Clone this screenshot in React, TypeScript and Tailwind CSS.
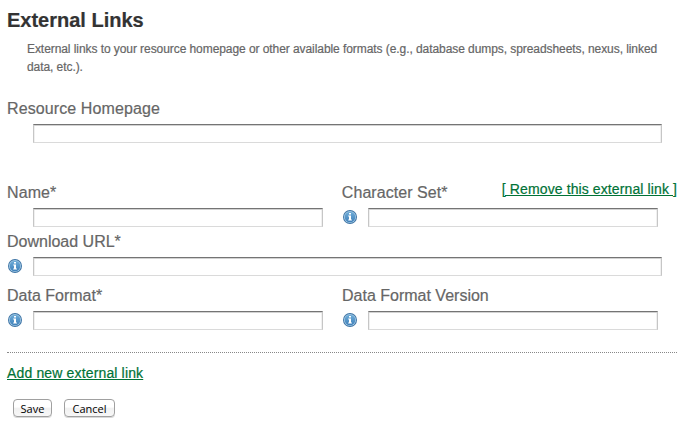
import React from "react";

function InfoIcon({ id }: { id: string }) {
  return (
    <svg className="h-3.5 w-3.5 shrink-0" viewBox="0 0 14 14" aria-label="Info">
      <defs>
        <linearGradient id={id} x1="0" y1="0" x2="0" y2="1">
          <stop offset="0" stopColor="#6fadd9" />
          <stop offset="1" stopColor="#3f80ba" />
        </linearGradient>
      </defs>
      <circle cx="7" cy="7" r="7" fill="#3c73a5" />
      <circle cx="7" cy="7" r="6.1" fill="#a4c9e3" />
      <circle cx="7" cy="7" r="5.3" fill={`url(#${id})`} />
      <path d="M6 3h2v1.6H6zM5.2 5.4H8v4h.9v1.2H5.2V9.4H6V6.6h-.8z" fill="#fff" />
    </svg>
  );
}

type FieldProps = {
  id: string;
  label: string;
  spacing: string;
  width: string;
  info?: boolean;
};

function Field({ id, label, spacing, width, info = false }: FieldProps) {
  return (
    <div className="flex h-11 flex-col justify-between">
      <label htmlFor={id} className={`h-5 text-base leading-5 whitespace-nowrap text-[#666] ${spacing}`}>
        {label}
      </label>
      <div className="flex h-[19px]">
        <div className="w-[26px] shrink-0 pt-[2px] pl-px">{info && <InfoIcon id={`${id}-shade`} />}</div>
        <input
          id={id}
          type="text"
          className={`h-[19px] shrink-0 border border-[#c6c6c6] border-t-[#747474] border-b-[#dadada] bg-white px-1 text-xs shadow-[inset_0_1px_0_#d2d2d2,inset_1px_0_0_#f0f0f0,inset_-1px_0_0_#f0f0f0] outline-none ${width}`}
        />
      </div>
    </div>
  );
}

function Button({ children, width }: { children: React.ReactNode; width: string }) {
  return (
    <button
      className={`h-[18px] rounded-[4px] border border-[#a0a0a0] bg-linear-to-b from-white from-45% via-[#f1f1f1] via-50% to-[#f7f7f7] text-center font-['Open_Sans',sans-serif] text-[11px] leading-[15px] font-medium text-black shadow-[0_1px_0_#d8d8d8] [-webkit-text-stroke:0] ${width}`}
    >
      {children}
    </button>
  );
}

export default function App() {
  return (
    <main className="flex h-[427px] w-[689px] flex-col bg-white pt-2 pr-3 pl-[7px] font-['Liberation_Sans',Arial,sans-serif] text-[#666] [-webkit-text-stroke:0.2px]">
      <h1 className="h-6 text-[20px] leading-6 font-bold text-[#333]">External Links</h1>
      <p className="mt-2 ml-5 text-[12px] leading-[18px] tracking-[-0.07px] text-[#666]">
        <span className="whitespace-nowrap">
          External links to your resource homepage or other available formats (e.g., database dumps, spreadsheets, nexus, linked
        </span>
        <br />
        data, etc.).
      </p>
      <div className="mt-[23px]">
        <Field id="homepage" label="Resource Homepage" spacing="tracking-[0.1px]" width="w-[629px]" />
      </div>
      <div className="mt-10 flex">
        <div className="w-[335px]">
          <Field id="name" label="Name*" spacing="tracking-[0.1px]" width="w-[290px]" />
        </div>
        <div className="w-[160px]">
          <Field id="charset" label="Character Set*" spacing="tracking-[0.05px]" width="w-[290px]" info />
        </div>
        <a
          href="#"
          className="-mt-1 h-5 text-[14px] leading-5 tracking-[0.11px] whitespace-nowrap text-[#007236] underline"
        >
          [ Remove this external link ]
        </a>
      </div>
      <div className="mt-[5px]">
        <Field id="url" label="Download URL*" spacing="tracking-normal" width="w-[629px]" info />
      </div>
      <div className="mt-2.5 flex">
        <div className="w-[335px]">
          <Field id="format" label="Data Format*" spacing="tracking-normal" width="w-[290px]" info />
        </div>
        <Field id="version" label="Data Format Version" spacing="tracking-normal" width="w-[290px]" info />
      </div>
      <div className="mt-[22px] border-t border-dotted border-[#888]" />
      <a
        href="#"
        className="mt-2.5 h-5 self-start text-[14px] leading-5 tracking-[0.15px] whitespace-nowrap text-[#007236] underline"
      >
        Add new external link
      </a>
      <div className="mt-4 ml-1.5 flex gap-3">
        <Button width="w-[39px]">Save</Button>
        <Button width="w-[51px]">Cancel</Button>
      </div>
    </main>
  );
}
